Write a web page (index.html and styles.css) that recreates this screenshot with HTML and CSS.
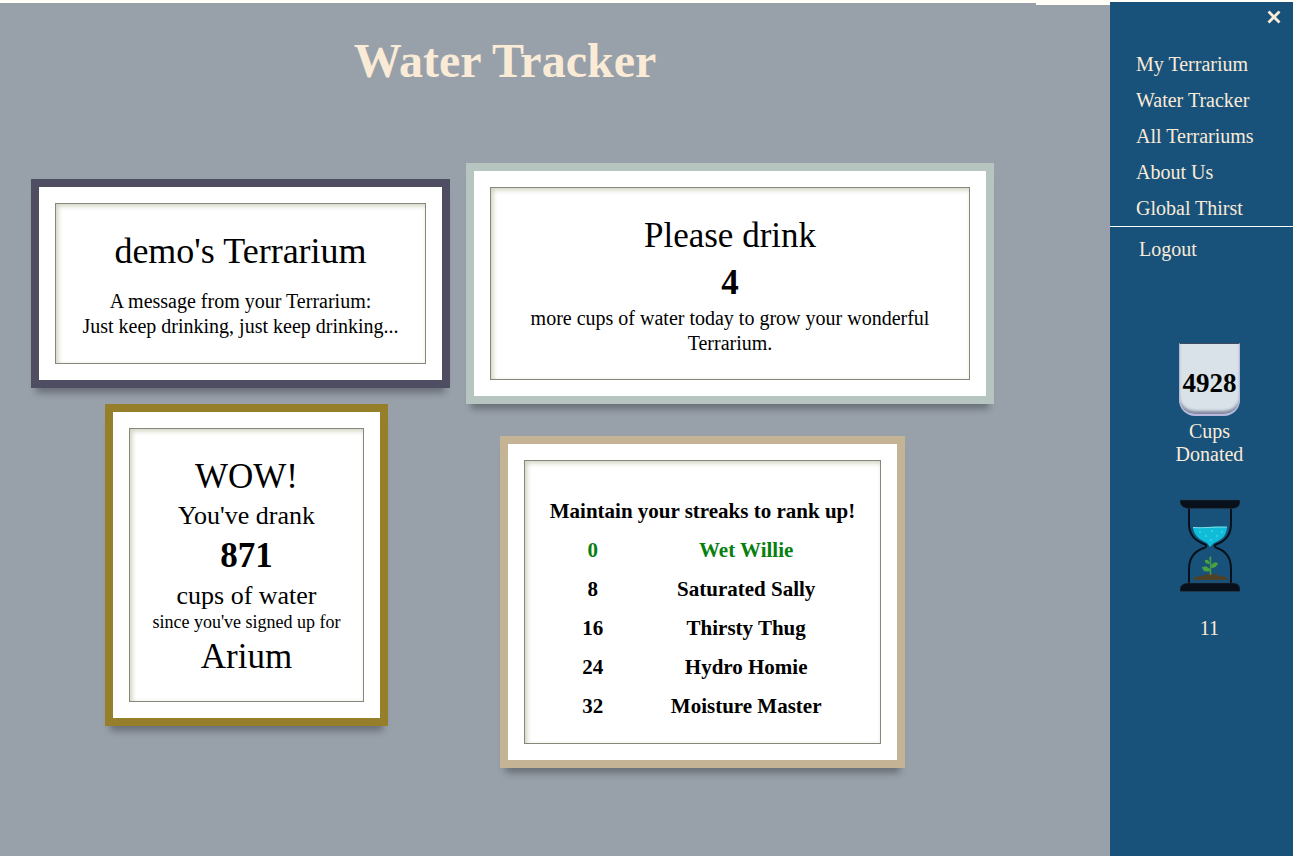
FILE: index.html
```html
<!DOCTYPE html>
<html lang="en">
<head>
<meta charset="utf-8">
<title>Water Tracker</title>
<link rel="stylesheet" href="styles.css">
</head>
<body>
<div class="page">
  <main class="tracker">
    <h1 class="title">Water Tracker</h1>
    <div class="row row-top">
      <section class="frame frame-plum">
        <div class="mat message">
          <h2 class="large">demo's Terrarium</h2>
          <p class="body-text">A message from your Terrarium:<br>Just keep drinking, just keep drinking...</p>
        </div>
      </section>
      <section class="frame frame-sage">
        <div class="mat drink">
          <p class="large">Please drink</p>
          <p class="count">4</p>
          <p class="body-text">more cups of water today to grow your wonderful Terrarium.</p>
        </div>
      </section>
    </div>
    <div class="row row-bottom">
      <section class="frame frame-gold">
        <div class="mat total">
          <p class="large">WOW!</p>
          <p class="medium">You've drank</p>
          <p class="count">871</p>
          <p class="medium">cups of water</p>
          <p class="small">since you've signed up for</p>
          <p class="large">Arium</p>
        </div>
      </section>
      <section class="frame frame-tan">
        <div class="mat ranks">
          <table class="rank-table">
            <caption>Maintain your streaks to rank up!</caption>
            <tbody>
              <tr class="current"><td>0</td><td>Wet Willie</td></tr>
              <tr><td>8</td><td>Saturated Sally</td></tr>
              <tr><td>16</td><td>Thirsty Thug</td></tr>
              <tr><td>24</td><td>Hydro Homie</td></tr>
              <tr><td>32</td><td>Moisture Master</td></tr>
            </tbody>
          </table>
        </div>
      </section>
    </div>
  </main>
  <div class="edge"></div>
  <aside class="sidebar">
    <button class="close" type="button" aria-label="Close menu">
      <svg width="14" height="14" viewBox="0 0 14 14"><path d="M1.500 1.500 12.500 12.500M12.500 1.500 1.500 12.500" stroke="currentColor" stroke-width="2.800"/></svg>
    </button>
    <nav class="menu">
      <a href="#">My Terrarium</a>
      <a href="#">Water Tracker</a>
      <a href="#">All Terrariums</a>
      <a href="#">About Us</a>
      <a href="#">Global Thirst</a>
    </nav>
    <a class="logout" href="#">Logout</a>
    <div class="stats">
      <div class="cup">4928</div>
      <p class="cup-label">Cups Donated</p>
      <svg class="hourglass" width="60" height="94" viewBox="0 0 60 94">
        <g fill="none" stroke="#08111b" stroke-width="2">
          <path d="M9 8V25C9 37 16 42 24 45Q29 47 24 49C15 52 9 58 9 70V86"/>
          <path d="M51 8V25C51 37 45 42 37 45Q32 47 37 49C46 52 51 58 51 70V86"/>
        </g>
        <path d="M0 1H60V4Q59 9 53 9.500H8Q2 9 0 4Z" fill="#08111b" stroke="#2f3f4a" stroke-width=".5"/>
        <path d="M0 92.500H60V89Q59 84 53 84H8Q2 84 0 89Z" fill="#08111b" stroke="#2f3f4a" stroke-width=".5"/>
        <path d="M13 28Q20 29 28 28T47 28C47 36 42 41 34 44L30 48 27 44C20 41 13 36 13 28Z" fill="#0fbdd9"/>
        <path d="M13 28.500Q20 29 28 28.500T47 28" fill="none" stroke="#7ddde8"/>
        <path d="M20 32v2M26 36v2M32 31v2M37 36v2M31 40v2M42 32v2" stroke="#64d9e8" stroke-width="1"/>
        <path d="M13 81Q14 77 23 76.500Q31 73 39 76.500Q47 77 48 81Z" fill="#4d4128"/>
        <path d="M30.500 76V59M30.500 71 25 68M30.500 67 36 64" stroke="#4c9348" stroke-width="1.500" fill="none"/>
        <path d="M30 72Q23 74 22 68Q28 66 30 72ZM31 69Q32 62 38 64Q37 69 31 69ZM30 65Q24 65 25 61Q29 60 30 65ZM30 61Q28 59 31 57Q32 59 30 61Z" fill="#47a43d"/>
      </svg>
      <p class="remaining">11</p>
    </div>
  </aside>
</div>
</body>
</html>
```
FILE: styles.css
```css
* {
  box-sizing: border-box;
}

body {
  margin: 0;
  background: #fffff8;
  color: #000;
  font-family: "Liberation Serif", serif;
}

h1,
h2,
p {
  margin: 0;
}

.page {
  display: grid;
  grid-template-columns: minmax(0, 1fr) 74px 183px;
  min-height: 100vh;
}

.tracker {
  margin-top: 3px;
  padding: 28px 26px 88px 0;
  background: #98a0aa;
}

.edge {
  margin-top: 5px;
  background: #98a0aa;
}

.title {
  color: #faebd7;
  font-family: "Palatino Linotype", "Book Antiqua", "Liberation Serif", serif;
  font-size: 48px;
  line-height: 60px;
  text-align: center;
}

.row {
  display: flex;
  justify-content: center;
  font-family: "Palatino Linotype", "Book Antiqua", "Liberation Serif", serif;
  text-align: center;
}

.row-top {
  align-items: center;
  gap: 16px;
  margin-top: 72px;
  padding-left: 15px;
}

.row-bottom {
  align-items: flex-start;
  gap: 112px;
}

.frame {
  padding: 16px;
  border: 8px solid;
  background: #fff;
  box-shadow: 0 10px 7px -5px rgba(0, 0, 0, 0.3);
}

.frame-plum {
  border-color: #4f4d62;
}

.frame-sage {
  border-color: #b7c5c1;
}

.frame-gold {
  border-color: #967f2b;
}

.frame-tan {
  margin-top: 32px;
  border-color: #c4b395;
}

.mat {
  border: 1px solid #888779;
  box-shadow: inset 2px 2px 5px #cfd0bf;
}

.message {
  width: 371px;
  padding: 25px 16px 24px;
}

.message .large {
  margin-bottom: 15px;
  font-size: 36px;
}

.drink {
  width: 480px;
  padding: 25px 24px 23px;
}

.drink .count {
  padding-top: 2px;
}

.total {
  width: 235px;
  padding: 25px 16px 22px;
}

.total .small {
  margin-bottom: 2px;
}

.ranks {
  width: 357px;
  padding: 31px 16px 17px;
}

.large {
  font-size: 35px;
  font-weight: 400;
  line-height: 45px;
}

.medium {
  font-size: 26px;
  line-height: 34px;
}

.count {
  font-size: 35px;
  font-weight: 700;
  line-height: 46px;
}

.body-text {
  font-size: 20px;
  line-height: 25px;
}

.small {
  font-size: 18px;
  line-height: 19px;
}

.rank-table {
  width: 100%;
  border-collapse: collapse;
  font-size: 21px;
  font-weight: 700;
  line-height: 39px;
}

.rank-table td {
  padding: 0;
}

.rank-table td:first-child {
  width: 32%;
}

.rank-table td:last-child {
  padding-right: 16px;
}

.current {
  color: #088010;
}

.sidebar {
  display: flex;
  flex-direction: column;
  margin-top: 2px;
  background: #18527b;
  color: #faebd7;
  font-size: 20px;
}

.close {
  display: flex;
  align-self: flex-end;
  margin: 8px 12px 0 0;
  padding: 0;
  border: 0;
  background: none;
  color: inherit;
}

.menu {
  display: flex;
  flex-direction: column;
  margin-top: 22px;
  padding-left: 26px;
  border-bottom: 1px solid #fff;
}

.sidebar a {
  color: inherit;
  line-height: 36px;
  text-decoration: none;
}

.logout {
  margin-top: 4px;
  padding-left: 29px;
}

.stats {
  display: flex;
  flex-direction: column;
  align-items: center;
  margin-top: 76px;
  padding-left: 16px;
  text-align: center;
}

.cup {
  display: flex;
  justify-content: center;
  width: 61px;
  height: 73px;
  padding-top: 5px;
  border: 1px solid #b9b9dd;
  border-top-color: #414b5c;
  border-bottom-width: 2px;
  border-radius: 0 0 16px 16px;
  background: #d8e2e8;
  box-shadow: inset 0 -4px 3px -1px #8388a0;
  color: #000;
  font-size: 27px;
  font-weight: 700;
  line-height: 69px;
}

.cup-label {
  width: 80px;
  margin-top: 4px;
  line-height: 23px;
}

.hourglass {
  margin-top: 33px;
}

.remaining {
  margin-top: 24px;
  line-height: 23px;
}
```
